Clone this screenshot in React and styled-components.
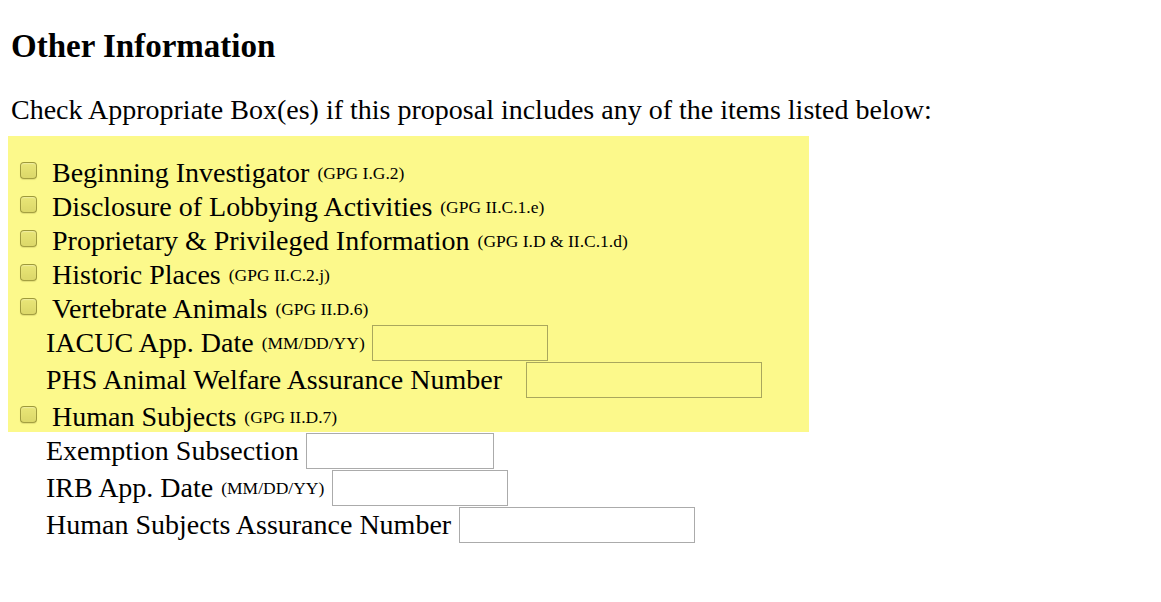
import React from "react";
import styled, { createGlobalStyle } from "styled-components";

const GlobalStyle = createGlobalStyle`
  body {
    margin: 0;
    background: #fff;
    color: #000;
    font-family: "Liberation Serif", "Times New Roman", serif;
  }
`;

const Page = styled.div`
  padding: 0 8px 40px;
`;

const Heading = styled.h3`
  font-size: 33px;
  font-weight: bold;
  margin: 0;
  padding: 30px 0 0 3px;
  line-height: 32px;
`;

const Intro = styled.p`
  font-size: 28px;
  margin: 0;
  padding: 32px 0 0 3px;
  line-height: 32px;
  height: 42px;
`;

const Highlight = styled.section`
  background-color: #fcf98b;
  width: 801px;
  padding: 18px 0 0;
`;

const CheckRow = styled.label`
  display: flex;
  align-items: center;
  box-sizing: border-box;
  height: 34px;
  padding: 4px 0 0 12px;
  font-size: 28px;
  line-height: 30px;
`;

const Box = styled.input.attrs({ type: "checkbox" })`
  appearance: none;
  flex: none;
  box-sizing: border-box;
  width: 17px;
  height: 17px;
  margin: 0 15px 6px 0;
  border: 1px solid rgba(80, 75, 0, 0.45);
  border-radius: 4px;
  background: linear-gradient(rgba(120, 112, 0, 0.14), rgba(120, 112, 0, 0.24));
  box-shadow: inset 0 1px 1px rgba(255, 255, 255, 0.3), 0 1px 1px rgba(80, 75, 0, 0.15);
`;

const Ref = styled.span`
  font-size: 17.5px;
  margin-left: ${(p) => p.$gap ?? 8}px;
`;

const FieldRow = styled.div`
  display: flex;
  align-items: center;
  height: 37px;
  padding-left: 38px;
  font-size: 28px;
  line-height: 34px;
`;

const Field = styled.input.attrs({ type: "text" })`
  box-sizing: border-box;
  width: ${(p) => p.$w}px;
  height: 36px;
  margin: 0 0 0 ${(p) => p.$gap ?? 8}px;
  border: 1px solid rgba(0, 0, 0, 0.33);
  background: transparent;
  font: inherit;
  padding: 0 4px;
`;

const items = [
  { label: "Beginning Investigator", ref: "(GPG I.G.2)" },
  { label: "Disclosure of Lobbying Activities", ref: "(GPG II.C.1.e)" },
  { label: "Proprietary & Privileged Information", ref: "(GPG I.D & II.C.1.d)" },
  { label: "Historic Places", ref: "(GPG II.C.2.j)" },
  { label: "Vertebrate Animals", ref: "(GPG II.D.6)" },
];

const App = () => {
  return (
    <Page>
      <GlobalStyle />
      <Heading>Other Information</Heading>
      <Intro>Check Appropriate Box(es) if this proposal includes any of the items listed below:</Intro>
      <Highlight>
        {items.map((item) => (
          <CheckRow key={item.label}>
            <Box />
            {item.label}
            <Ref>{item.ref}</Ref>
          </CheckRow>
        ))}
        <FieldRow>
          IACUC App. Date<Ref>(MM/DD/YY)</Ref>
          <Field $w={176} $gap={7} />
        </FieldRow>
        <FieldRow>
          PHS Animal Welfare Assurance Number
          <Field $w={236} $gap={24} />
        </FieldRow>
        <CheckRow>
          <Box />
          Human Subjects
          <Ref>(GPG II.D.7)</Ref>
        </CheckRow>
      </Highlight>
      <FieldRow>
        Exemption Subsection
        <Field $w={188} $gap={7} />
      </FieldRow>
      <FieldRow>
        IRB App. Date<Ref>(MM/DD/YY)</Ref>
        <Field $w={176} $gap={8} />
      </FieldRow>
      <FieldRow>
        Human Subjects Assurance Number
        <Field $w={236} $gap={8} />
      </FieldRow>
    </Page>
  );
};

export default App;
